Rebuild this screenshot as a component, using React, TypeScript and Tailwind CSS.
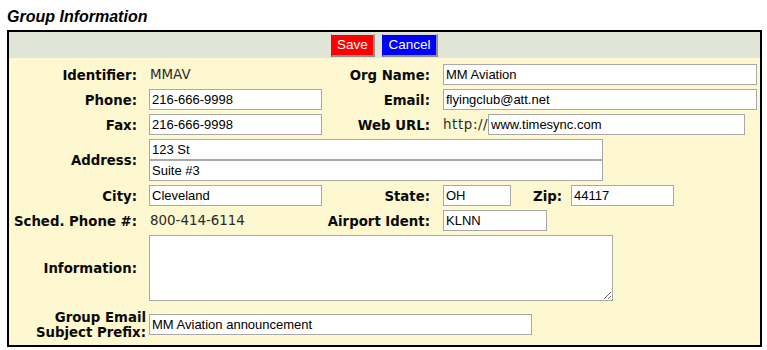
import React from "react";

const inputCls =
  "block h-[21px] border border-solid border-[#a9a9a9] bg-white px-[2px] text-[13px] text-black font-['Liberation_Sans',Arial,sans-serif] outline-none";

function Label({ children, w = "w-[128px]" }: { children: React.ReactNode; w?: string }) {
  return <div className={`${w} shrink-0 pt-[2px] text-right font-bold text-[13.3px] text-[#0a0a0a]`}>{children}</div>;
}

function Label2({ children }: { children: React.ReactNode }) {
  return <div className="w-[108px] shrink-0 pt-[2px] text-right font-bold text-[13.3px] text-[#0a0a0a]">{children}</div>;
}

export default function App() {
  return (
    <div className="bg-white w-[767px] h-[350px] font-['DejaVu_Sans',Verdana,sans-serif]">
      <div className="pl-[7px] pt-[8px] h-[26px] leading-[18px] text-[16px] font-bold italic text-black font-['Liberation_Sans',Arial,sans-serif]">
        Group Information
      </div>
      <div className="mt-[4px] ml-[7px] w-[755px] border-2 border-solid border-black bg-[#fdf8cf]">
        <div className="flex h-[26px] items-start justify-center gap-[7px] bg-[#e0e5d7] pt-[2px]">
          <button className="h-[23px] w-[44px] border-solid border-t border-l border-r-2 border-b-2 border-t-[#d8d8d8] border-l-[#ff0000] border-r-[#8f8f8f] border-b-[#8f8f8f] bg-[#ff0000] text-[13.5px] text-white font-['Liberation_Sans',Arial,sans-serif] leading-none">
            Save
          </button>
          <button className="h-[23px] w-[56px] border-solid border-t border-l border-r-2 border-b-2 border-t-[#d8d8d8] border-l-[#0000ff] border-r-[#8f8f8f] border-b-[#8f8f8f] bg-[#0000ff] text-[13.5px] text-white font-['Liberation_Sans',Arial,sans-serif] leading-none">
            Cancel
          </button>
        </div>
        <div className="pt-[4px]">
          {/* Identifier / Org Name */}
          <div className="flex h-[25px] items-center">
            <Label>Identifier:</Label>
            <div className="ml-[12px] w-[173px] shrink-0 pl-[1px] pt-[2px] text-[13.4px] text-[#2a2a2a]">MMAV</div>
            <Label2>Org Name:</Label2>
            <div className="ml-[13px]">
              <input className={`${inputCls} w-[314px]`} defaultValue="MM Aviation" />
            </div>
          </div>
          {/* Phone / Email */}
          <div className="flex h-[25px] items-center">
            <Label>Phone:</Label>
            <div className="ml-[12px] w-[173px] shrink-0">
              <input className={`${inputCls} w-[173px]`} defaultValue="216-666-9998" />
            </div>
            <Label2>Email:</Label2>
            <div className="ml-[13px]">
              <input className={`${inputCls} w-[314px]`} defaultValue="flyingclub@att.net" />
            </div>
          </div>
          {/* Fax / Web URL */}
          <div className="flex h-[25px] items-center">
            <Label>Fax:</Label>
            <div className="ml-[12px] w-[173px] shrink-0">
              <input className={`${inputCls} w-[173px]`} defaultValue="216-666-9998" />
            </div>
            <Label2>Web URL:</Label2>
            <div className="ml-[13px] flex items-center">
              <span className="w-[45px] shrink-0 pt-[2px] text-[13.4px] text-[#2a2a2a] tracking-[0.6px]">http://</span>
              <input className={`${inputCls} w-[257px]`} defaultValue="www.timesync.com" />
            </div>
          </div>
          {/* Address */}
          <div className="flex h-[46px] items-center">
            <Label>Address:</Label>
            <div className="ml-[12px] flex flex-col">
              <input className={`${inputCls} w-[454px]`} defaultValue="123 St" />
              <input className={`${inputCls} w-[454px]`} defaultValue="Suite #3" />
            </div>
          </div>
          {/* City / State / Zip */}
          <div className="flex h-[25px] items-center">
            <Label>City:</Label>
            <div className="ml-[12px] w-[173px] shrink-0">
              <input className={`${inputCls} w-[173px]`} defaultValue="Cleveland" />
            </div>
            <Label2>State:</Label2>
            <div className="ml-[13px] flex items-center">
              <input className={`${inputCls} w-[68px]`} defaultValue="OH" />
              <div className="ml-[22px] w-[29px] shrink-0 pt-[2px] font-bold text-[13.3px] text-[#0a0a0a]">Zip:</div>
              <input className={`${inputCls} ml-[9px] w-[103px]`} defaultValue="44117" />
            </div>
          </div>
          {/* Sched phone / Airport */}
          <div className="flex h-[25px] items-center">
            <Label>Sched. Phone #:</Label>
            <div className="ml-[12px] w-[173px] shrink-0 pl-[1px] pt-[2px] text-[13.4px] text-[#2a2a2a]">800-414-6114</div>
            <Label2>Airport Ident:</Label2>
            <div className="ml-[13px]">
              <input className={`${inputCls} w-[104px]`} defaultValue="KLNN" />
            </div>
          </div>
          {/* Information */}
          <div className="flex h-[70px] items-center">
            <Label>Information:</Label>
            <div className="ml-[12px]">
              <textarea className="block h-[66px] w-[464px] border border-solid border-[#a9a9a9] bg-white px-[2px] text-[13px] outline-none font-['Liberation_Sans',Arial,sans-serif]" />
            </div>
          </div>
          {/* Group Email Subject Prefix */}
          <div className="flex h-[42px] items-center">
            <div className="w-[137px] shrink-0 pt-[2px] text-right font-bold text-[13.3px] leading-[15px] text-[#0a0a0a]">
              Group Email
              <br />
              Subject Prefix:
            </div>
            <div className="ml-[3px]">
              <input className={`${inputCls} w-[383px]`} defaultValue="MM Aviation announcement" />
            </div>
          </div>
        </div>
      </div>
    </div>
  );
}
